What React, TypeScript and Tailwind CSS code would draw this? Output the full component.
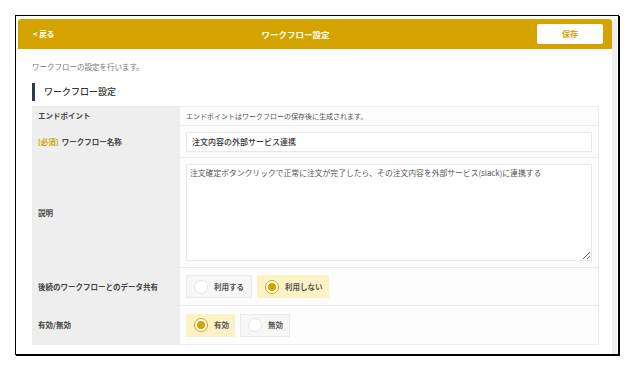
import type { ReactNode } from 'react';

const font = { fontFamily: '"Noto Sans CJK JP", "Noto Sans", sans-serif' };

function Radio({ label, checked, width }: { label: string; checked: boolean; width: string }) {
  return (
    <div
      className={`${width} h-[23px] flex items-center pl-[7px] gap-[6px] border ${
        checked ? 'bg-[#fdf1c6] border-[#fdf1c6]' : 'bg-[#f7f7f7] border-[#ebebeb]'
      }`}
    >
      {checked ? (
        <span className="w-[14px] h-[14px] rounded-full border-[1.5px] border-[#d4a300] bg-white flex items-center justify-center">
          <span className="w-[8px] h-[8px] rounded-full bg-[#d4a300]" />
        </span>
      ) : (
        <span className="w-[14px] h-[14px] rounded-full border border-[#e6e6e6] bg-white" />
      )}
      <span className="text-[7.5px] font-bold text-[#555]">{label}</span>
    </div>
  );
}

function Row({ label, height, children, last }: { label: ReactNode; height: string; children: ReactNode; last?: boolean }) {
  return (
    <div className={`flex ${height} ${last ? '' : 'border-b border-[#ececec]'}`}>
      <div className="w-[147px] shrink-0 bg-[#eeeeee] flex items-center pl-[5px] text-[7.5px] font-bold text-[#444]">
        {label}
      </div>
      <div className="flex-1 bg-[#fdfdfd] flex items-center px-[6px]">{children}</div>
    </div>
  );
}

export default function App() {
  return (
    <div className="min-h-screen bg-white p-[15px]" style={font}>
      <div className="w-[604px] h-[340px] border border-black shadow-[1px_1px_0_#000] bg-white pt-[3px] pl-[2px] flex">
        <div className="w-[594px] flex flex-col">
          {/* header */}
          <div className="h-[30px] bg-[#d4a300] rounded-t-[3px] flex items-center justify-between pl-[15px] pr-[9px]">
            <span className="text-[7.5px] font-bold text-white">&lt; 戻る</span>
            <span className="text-[8.5px] font-bold text-white">ワークフロー設定</span>
            <button className="w-[66px] h-[20px] bg-white rounded-[2px] text-[8px] font-bold text-[#d4a300]">
              保存
            </button>
          </div>

          {/* body */}
          <div className="pl-[14px] pr-[13px] pt-[12px]">
            <p className="text-[7.5px] leading-[12px] text-[#777]">ワークフローの設定を行います。</p>

            <div className="mt-[10px] flex items-center gap-[9px]">
              <span className="w-[3px] h-[18px] bg-[#2e3a4d]" />
              <h2 className="text-[9px] font-medium text-[#333]">ワークフロー設定</h2>
            </div>

            <div className="mt-[5px] border border-[#ececec]">
              <Row label="エンドポイント" height="h-[19px]">
                <span className="text-[7px] text-[#555]">エンドポイントはワークフローの保存後に生成されます。</span>
              </Row>
              <Row
                label={
                  <>
                    <span className="text-[#d4a300] mr-[3px]">[必須]</span>ワークフロー名称
                  </>
                }
                height="h-[32px]"
              >
                <div className="w-full h-[20px] border border-[#e8e8e8] bg-white flex items-center pl-[5px] text-[8px] font-medium text-[#333]">
                  注文内容の外部サービス連携
                </div>
              </Row>
              <Row label="説明" height="h-[110px]">
                <textarea
                  readOnly
                  value="注文確定ボタンクリックで正常に注文が完了したら、その注文内容を外部サービス(slack)に連携する"
                  className="w-full h-[97px] border border-[#e8e8e8] bg-white px-[3px] pt-[2px] text-[7.8px] text-[#555] outline-none"
                />
              </Row>
              <Row label="後続のワークフローとのデータ共有" height="h-[38px]">
                <div className="flex gap-[5px]">
                  <Radio label="利用する" checked={false} width="w-[66px]" />
                  <Radio label="利用しない" checked width="w-[72px]" />
                </div>
              </Row>
              <Row label="有効/無効" height="h-[38px]" last>
                <div className="flex gap-[5px]">
                  <Radio label="有効" checked width="w-[49px]" />
                  <Radio label="無効" checked={false} width="w-[50px]" />
                </div>
              </Row>
            </div>
          </div>
        </div>
        <div className="w-[5px] bg-[#efefef]" />
      </div>
    </div>
  );
}
